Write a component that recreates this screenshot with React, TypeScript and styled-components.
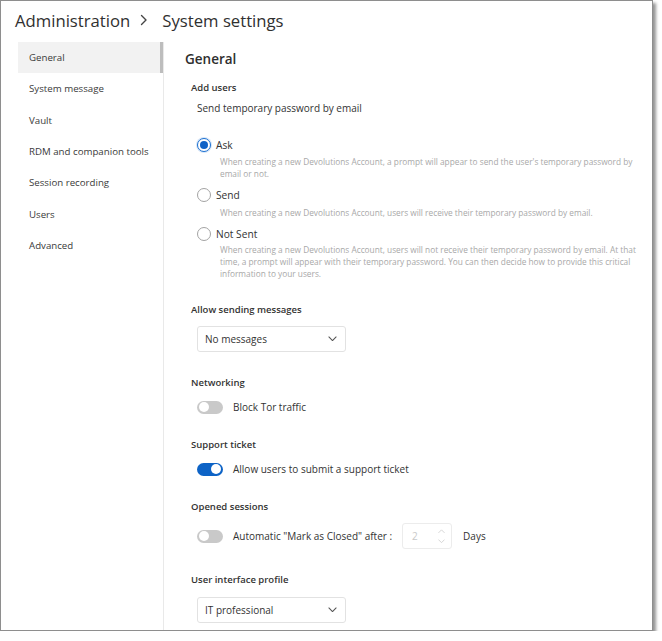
import React from "react";
import styled, { createGlobalStyle } from "styled-components";

const Global = createGlobalStyle`
  html, body { margin: 0; padding: 0; background: #ffffff; }
  body { font-family: "Open Sans", "Noto Sans", sans-serif; color: #333333; }
  * { box-sizing: border-box; }
`;

const Window = styled.div`
  width: 653px;
  height: 631px;
  border: 1px solid #8e8e8e;
  box-shadow: 3px 3px 3px rgba(0, 0, 0, 0.42);
  background: #ffffff;
  display: flex;
  flex-direction: column;
  overflow: hidden;
`;

const Header = styled.div`
  height: 41px;
  padding-left: 14px;
  display: flex;
  align-items: center;
  font-size: 16.7px;
  color: #303030;
  padding-bottom: 3px;
`;

const Sep = styled.span`
  display: inline-flex;
  align-items: center;
  margin: 0 14px 0 10px;
  color: #444;
`;

const Main = styled.div`
  flex: 1;
  display: flex;
  min-height: 0;
`;

const Sidebar = styled.div`
  margin-left: 17px;
  display: flex;
  border-right: 1px solid #e9e9e9;
`;

const NavList = styled.div`
  width: 142px;
  display: flex;
  flex-direction: column;
`;

const NavItem = styled.div<{ $active?: boolean }>`
  height: 31.3px;
  display: flex;
  align-items: center;
  padding-left: 11px;
  font-size: 9.7px;
  color: #3a3a3a;
  background: ${(p) => (p.$active ? "#f2f2f2" : "transparent")};
`;

const Track = styled.div`
  width: 3px;
`;

const Thumb = styled.div`
  height: 31px;
  background: #bdbdbd;
`;

const Content = styled.div`
  flex: 1;
  padding: 8px 0 0 21px;
  display: flex;
  flex-direction: column;
`;

const Heading = styled.div`
  font-size: 13.5px;
  font-weight: 600;
  line-height: 18px;
  color: #2e2e2e;
`;

const Section = styled.div<{ $top: number }>`
  margin-top: ${(p) => p.$top}px;
  padding-left: 6px;
  display: flex;
  flex-direction: column;
`;

const Label = styled.div`
  font-size: 9.5px;
  font-weight: 600;
  line-height: 14px;
  color: #333;
`;

const Body = styled.div<{ $top: number }>`
  margin-top: ${(p) => p.$top}px;
  padding-left: 6px;
`;

const Text = styled.div`
  font-size: 10px;
  line-height: 14px;
  color: #333;
`;

const RadioRow = styled.div<{ $top: number }>`
  margin-top: ${(p) => p.$top}px;
  display: flex;
  align-items: center;
  height: 16px;
  gap: 5px;
  font-size: 10.2px;
  color: #333;
`;

const RadioCircle = styled.span<{ $checked?: boolean }>`
  width: 14px;
  height: 14px;
  border-radius: 50%;
  border: ${(p) => (p.$checked ? "1.5px solid #1a6fd1" : "1px solid #a3a3a3")};
  box-shadow: ${(p) => (p.$checked ? "0 0 0 1px rgba(26,111,209,0.18)" : "none")};
  display: flex;
  align-items: center;
  justify-content: center;
  background: #fff;
  flex: none;
  &::after {
    content: "";
    display: ${(p) => (p.$checked ? "block" : "none")};
    width: 8px;
    height: 8px;
    border-radius: 50%;
    background: #0f62c7;
  }
`;

const Desc = styled.div<{ $top: number }>`
  margin-top: ${(p) => p.$top}px;
  margin-left: 23px;
  font-size: 8.3px;
  line-height: 12px;
  color: #a8a8a8;
  max-width: 420px;
`;

const Select = styled.div`
  width: 149px;
  height: 26px;
  border: 1px solid #e2e2e2;
  border-radius: 3px;
  display: flex;
  align-items: center;
  justify-content: space-between;
  padding: 0 8px 0 7px;
  font-size: 10px;
  color: #333;
`;

const ToggleRow = styled.div`
  display: flex;
  align-items: center;
  min-height: 16px;
  gap: 10px;
  font-size: 10px;
  color: #333;
`;

const Toggle = styled.span<{ $on?: boolean }>`
  width: 26px;
  height: 13px;
  border-radius: 7px;
  background: ${(p) => (p.$on ? "#0d63c6" : "#c9c9c9")};
  display: flex;
  align-items: center;
  justify-content: ${(p) => (p.$on ? "flex-end" : "flex-start")};
  padding: 0 2px;
  flex: none;
  &::after {
    content: "";
    width: 10px;
    height: 10px;
    border-radius: 50%;
    background: #ffffff;
  }
`;

const NumberBox = styled.div`
  width: 50px;
  height: 26px;
  border: 1px solid #ececec;
  border-radius: 3px;
  display: flex;
  align-items: center;
  justify-content: space-between;
  padding: 0 6px 0 9px;
  color: #c9c9c9;
  font-size: 10px;
`;

const Spin = styled.div`
  display: flex;
  flex-direction: column;
  gap: 6px;
`;

const Days = styled.span`
  margin-left: 1px;
`;

const Chevron = ({ up, color = "#555", w = 9 }: { up?: boolean; color?: string; w?: number }) => (
  <svg width={w} height={w / 2 + 1} viewBox="0 0 10 6" fill="none">
    <path
      d={up ? "M1 5 L5 1 L9 5" : "M1 1 L5 5 L9 1"}
      stroke={color}
      strokeWidth={1.2}
      strokeLinecap="round"
      strokeLinejoin="round"
    />
  </svg>
);

const navItems = [
  "General",
  "System message",
  "Vault",
  "RDM and companion tools",
  "Session recording",
  "Users",
  "Advanced",
];

export default function App() {
  return (
    <>
      <Global />
      <Window>
        <Header>
          Administration
          <Sep>
            <svg width="8" height="12" viewBox="0 0 8 12" fill="none">
              <path d="M1.5 1.5 L6 6 L1.5 10.5" stroke="#444" strokeWidth="1.4" strokeLinecap="round" strokeLinejoin="round" />
            </svg>
          </Sep>
          System settings
        </Header>
        <Main>
          <Sidebar>
            <NavList>
              {navItems.map((n, i) => (
                <NavItem key={n} $active={i === 0}>
                  {n}
                </NavItem>
              ))}
            </NavList>
            <Track>
              <Thumb />
            </Track>
          </Sidebar>
          <Content>
            <Heading>General</Heading>

            <Section $top={13}>
              <Label>Add users</Label>
              <Body $top={6}>
                <Text>Send temporary password by email</Text>
                <RadioRow $top={22}>
                  <RadioCircle $checked />
                  Ask
                </RadioRow>
                <Desc $top={3}>
                  When creating a new Devolutions Account, a prompt will appear to send the user's temporary password by
                  email or not.
                </Desc>
                <RadioRow $top={7}>
                  <RadioCircle />
                  Send
                </RadioRow>
                <Desc $top={4}>
                  When creating a new Devolutions Account, users will receive their temporary password by email.
                </Desc>
                <RadioRow $top={7}>
                  <RadioCircle />
                  Not Sent
                </RadioRow>
                <Desc $top={2}>
                  When creating a new Devolutions Account, users will not receive their temporary password by email. At that
                  time, a prompt will appear with their temporary password. You can then decide how to provide this critical
                  information to your users.
                </Desc>
              </Body>
            </Section>

            <Section $top={23}>
              <Label>Allow sending messages</Label>
              <Body $top={9}>
                <Select>
                  No messages
                  <Chevron />
                </Select>
              </Body>
            </Section>

            <Section $top={24}>
              <Label>Networking</Label>
              <Body $top={9}>
                <ToggleRow>
                  <Toggle />
                  Block Tor traffic
                </ToggleRow>
              </Body>
            </Section>

            <Section $top={23}>
              <Label>Support ticket</Label>
              <Body $top={9}>
                <ToggleRow>
                  <Toggle $on />
                  Allow users to submit a support ticket
                </ToggleRow>
              </Body>
            </Section>

            <Section $top={23}>
              <Label>Opened sessions</Label>
              <Body $top={9}>
                <ToggleRow>
                  <Toggle />
                  Automatic "Mark as Closed" after :
                  <NumberBox>
                    2
                    <Spin>
                      <Chevron up color="#cfcfcf" w={7} />
                      <Chevron color="#cfcfcf" w={7} />
                    </Spin>
                  </NumberBox>
                  <Days>Days</Days>
                </ToggleRow>
              </Body>
            </Section>

            <Section $top={24}>
              <Label>User interface profile</Label>
              <Body $top={10}>
                <Select>
                  IT professional
                  <Chevron />
                </Select>
              </Body>
            </Section>
          </Content>
        </Main>
      </Window>
    </>
  );
}
